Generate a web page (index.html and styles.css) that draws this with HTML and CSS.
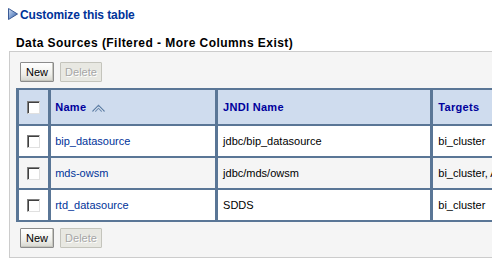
FILE: index.html
```html
<!DOCTYPE html>
<html>
<head>
<meta charset="utf-8">
<link rel="stylesheet" href="styles.css">
</head>
<body>
<div class="page">
  <div class="customize">
    <svg class="tri" width="10" height="12" viewBox="0 0 10 12">
      <defs>
        <linearGradient id="tg" x1="0" y1="0" x2="1" y2="1">
          <stop offset="0" stop-color="#d6e2f4"/>
          <stop offset="0.5" stop-color="#7c9dd0"/>
          <stop offset="1" stop-color="#2d4f8f"/>
        </linearGradient>
      </defs>
      <polygon points="0.5,0.5 9.5,6 0.5,11.5" fill="url(#tg)" stroke="#3a5a96" stroke-width="1"/>
    </svg>
    <a class="custom-link" href="#">Customize this table</a>
  </div>
  <div class="title">Data Sources (Filtered - More Columns Exist)</div>
  <div class="panel">
    <div class="toolbar">
      <button class="btn">New</button>
      <button class="btn btn-disabled" disabled>Delete</button>
    </div>
    <table class="grid">
      <colgroup>
        <col class="c-check"><col class="c-name"><col class="c-jndi"><col class="c-targets">
      </colgroup>
      <thead>
        <tr>
          <th class="check"><span class="cb"></span></th>
          <th>Name <svg class="sort" width="13" height="8" viewBox="0 0 13 8"><polyline points="0.5,7.5 6.5,1.5 12.5,7.5" fill="none" stroke="#5f7fa6" stroke-width="1.3"/><polyline points="3.2,7.5 6.5,4.2 9.8,7.5" fill="none" stroke="#6f8db2" stroke-width="1.2"/><polyline points="1.9,7.5 6.5,2.9 11.1,7.5" fill="none" stroke="#e8eef6" stroke-width="0.9"/></svg></th>
          <th>JNDI Name</th>
          <th>Targets</th>
        </tr>
      </thead>
      <tbody>
        <tr class="odd">
          <td class="check"><span class="cb"></span></td>
          <td><a class="row-link" href="#">bip_datasource</a></td>
          <td>jdbc/bip_datasource</td>
          <td>bi_cluster</td>
        </tr>
        <tr class="even">
          <td class="check"><span class="cb"></span></td>
          <td><a class="row-link" href="#">mds-owsm</a></td>
          <td>jdbc/mds/owsm</td>
          <td>bi_cluster, AdminServer</td>
        </tr>
        <tr class="odd">
          <td class="check"><span class="cb"></span></td>
          <td><a class="row-link" href="#">rtd_datasource</a></td>
          <td>SDDS</td>
          <td>bi_cluster</td>
        </tr>
      </tbody>
    </table>
    <div class="toolbar">
      <button class="btn">New</button>
      <button class="btn btn-disabled" disabled>Delete</button>
    </div>
  </div>
</div>
</body>
</html>
```

FILE: styles.css
```css
html, body {
  margin: 0;
  padding: 0;
  background: #ffffff;
  overflow: hidden;
}
body {
  width: 492px;
  height: 260px;
  font-family: "Liberation Sans", Arial, sans-serif;
  font-size: 11px;
  color: #000;
}
.page {
  width: 640px;
  padding-top: 8px;
}
.customize {
  display: flex;
  align-items: flex-start;
  height: 14px;
  padding-left: 8px;
}
.tri {
  display: block;
  margin-right: 2px;
}
.custom-link {
  font-weight: bold;
  font-size: 12px;
  line-height: 14px;
  letter-spacing: -0.1px;
  color: #003399;
  text-decoration: none;
}
.title {
  margin-top: 14px;
  padding-left: 16px;
  font-weight: bold;
  font-size: 12px;
  line-height: 14px;
  height: 15px;
  letter-spacing: 0.45px;
  color: #000;
}
.panel {
  margin-left: 9px;
  width: 620px;
  background: #f5f5f5;
  border: 1px solid #cccccc;
  padding: 10px 0 9px 6px;
  display: flex;
  flex-direction: column;
  gap: 6px;
}
.toolbar {
  display: flex;
  gap: 6px;
  padding-left: 4px;
}
.btn {
  box-sizing: border-box;
  height: 20px;
  padding: 0 4px;
  font-family: "Liberation Sans", Arial, sans-serif;
  font-size: 11px;
  color: #000;
  border: 1px solid #8c8c8c;
  border-radius: 1px;
  background: linear-gradient(#ffffff, #f0f0ec 60%, #d6d6cf);
  box-shadow: inset -1px -1px 0 #c6c6be;
}
.toolbar .btn:first-child {
  width: 34px;
}
.btn-disabled {
  width: 42px;
  color: #a6a6a6;
  border-color: #c4c4bc;
  background: #e8e8e2;
  box-shadow: none;
  text-shadow: 1px 1px 0 #ffffff;
}
.grid {
  table-layout: fixed;
  width: 541px;
  border-collapse: separate;
  border-spacing: 3px 2px;
  background: #5a7696;
}
.c-check { width: 29px; }
.c-name { width: 163px; }
.c-jndi { width: 211px; }
.c-targets { width: 120px; }
.grid th, .grid td {
  box-sizing: border-box;
  padding: 0 4px;
  text-align: left;
  white-space: nowrap;
  overflow: hidden;
}
.grid th {
  height: 34px;
  background: #cfdcee;
  color: #00009c;
  font-weight: bold;
  font-size: 11px;
  letter-spacing: 0.3px;
}
.grid td {
  height: 30px;
}
.grid tr.odd td { background: #ffffff; }
.grid tr.even td { background: #f5f5f5; }
.grid .check {
  padding: 0;
  text-align: center;
}
.grid td:nth-child(3), .grid th:nth-child(3) { padding-left: 5px; }
.grid td:nth-child(4), .grid th:nth-child(4) { padding-left: 5px; }
.cb {
  display: inline-block;
  box-sizing: border-box;
  width: 13px;
  height: 13px;
  vertical-align: middle;
  background: #ffffff;
  border-top: 1px solid #808080;
  border-left: 1px solid #808080;
  border-right: 1px solid #e0e0e0;
  border-bottom: 1px solid #e0e0e0;
  box-shadow: inset 1px 1px 0 #404040;
}
.sort {
  vertical-align: -1px;
  margin-left: 2px;
}
.row-link {
  color: #003399;
  text-decoration: none;
}
```
